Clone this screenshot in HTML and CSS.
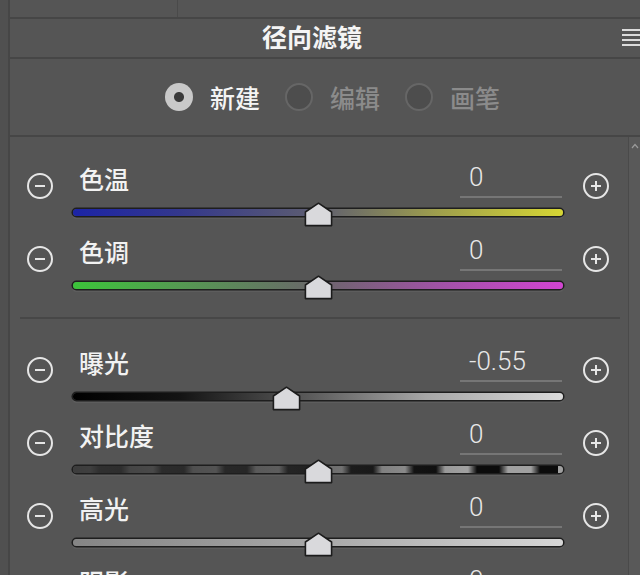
FILE: index.html
```html
<!DOCTYPE html>
<html lang="zh-CN">
<head>
  <meta charset="UTF-8">
  <meta name="viewport" content="width=device-width, initial-scale=1.0">
  <title>径向滤镜</title>
  <link rel="stylesheet" href="styles.css">
</head>
<body>
  <div class="app">
    <div class="side"></div>
    <div class="main">
      <div class="topbar"><span class="topbar-tab"></span></div>

      <div class="header">
        <span></span>
        <h1>径向滤镜</h1>
        <span class="menu"><i></i><i></i><i></i><i></i></span>
      </div>

      <div class="modes">
        <div class="mode active"><span class="radio"></span>新建</div>
        <div class="mode"><span class="radio"></span>编辑</div>
        <div class="mode"><span class="radio"></span>画笔</div>
      </div>

      <div class="body">
        <div class="sliders">
          <div class="group first">
            <div class="row">
              <span class="btn minus"></span>
              <div class="head"><span class="label">色温</span><span class="value">0</span></div>
              <span class="btn plus"></span>
              <div class="track temp">
                <svg class="thumb" style="left: 50%" viewBox="0 0 29 25"><polygon points="14.5,1.2 27.6,10 27.6,23.6 1.4,23.6 1.4,10"/></svg>
              </div>
            </div>
            <div class="row">
              <span class="btn minus"></span>
              <div class="head"><span class="label">色调</span><span class="value">0</span></div>
              <span class="btn plus"></span>
              <div class="track tint">
                <svg class="thumb" style="left: 50%" viewBox="0 0 29 25"><polygon points="14.5,1.2 27.6,10 27.6,23.6 1.4,23.6 1.4,10"/></svg>
              </div>
            </div>
          </div>

          <div class="divider"></div>

          <div class="group">
            <div class="row">
              <span class="btn minus"></span>
              <div class="head"><span class="label">曝光</span><span class="value">-0.55</span></div>
              <span class="btn plus"></span>
              <div class="track exposure">
                <svg class="thumb" style="left: 43.5%" viewBox="0 0 29 25"><polygon points="14.5,1.2 27.6,10 27.6,23.6 1.4,23.6 1.4,10"/></svg>
              </div>
            </div>
            <div class="row">
              <span class="btn minus"></span>
              <div class="head"><span class="label">对比度</span><span class="value">0</span></div>
              <span class="btn plus"></span>
              <div class="track contrast">
                <svg class="thumb" style="left: 50%" viewBox="0 0 29 25"><polygon points="14.5,1.2 27.6,10 27.6,23.6 1.4,23.6 1.4,10"/></svg>
              </div>
            </div>
            <div class="row">
              <span class="btn minus"></span>
              <div class="head"><span class="label">高光</span><span class="value">0</span></div>
              <span class="btn plus"></span>
              <div class="track highlights">
                <svg class="thumb" style="left: 50%" viewBox="0 0 29 25"><polygon points="14.5,1.2 27.6,10 27.6,23.6 1.4,23.6 1.4,10"/></svg>
              </div>
            </div>
            <div class="row">
              <span class="btn minus"></span>
              <div class="head"><span class="label">阴影</span><span class="value">0</span></div>
              <span class="btn plus"></span>
              <div class="track highlights"></div>
            </div>
          </div>
        </div>

        <div class="scrollbar">
          <svg viewBox="0 0 8 6" width="8" height="6"><polyline points="1,5 4,1.5 7,5"/></svg>
        </div>
      </div>
    </div>
  </div>
</body>
</html>
```

FILE: styles.css
```css
* {
  box-sizing: border-box;
}

html, body {
  margin: 0;
  height: 100%;
  overflow: hidden;
}

body {
  background-color: #555555;
  font-family: "Noto Sans CJK SC", "Noto Sans", sans-serif;
  color: #f2f2f2;
}

.app {
  display: flex;
  height: 100%;
}

.side {
  width: 10px;
  flex: none;
  background: #505050;
  border-right: 2px solid #464646;
}

.main {
  flex: 1;
  display: flex;
  flex-direction: column;
  min-width: 0;
}

/* top strip */
.topbar {
  height: 19px;
  flex: none;
  border-bottom: 2px solid #464646;
  padding-left: 167px;
}

.topbar-tab {
  display: block;
  width: 1px;
  height: 17px;
  background: #4a4a4a;
}

/* panel title */
.header {
  height: 40px;
  flex: none;
  display: grid;
  grid-template-columns: 1fr auto 1fr;
  align-items: start;
  padding-right: 26px;
  border-bottom: 2px solid #464646;
}

.header h1 {
  margin: 0;
  padding-top: 5px;
  font-size: 25px;
  line-height: 25px;
  font-weight: 700;
  color: #f4f4f4;
}

.menu {
  justify-self: end;
  margin-right: -26px;
  margin-top: 10px;
  width: 18px;
  display: flex;
  flex-direction: column;
  gap: 3px;
}

.menu i {
  display: block;
  height: 2px;
  background: #dcdcdc;
}

/* new / edit / brush */
.modes {
  height: 78px;
  flex: none;
  display: flex;
  align-items: center;
  justify-content: center;
  padding-left: 15px;
  gap: 25px;
  border-bottom: 2px solid #464646;
}

.mode {
  display: flex;
  align-items: center;
  gap: 17px;
  font-size: 25px;
  line-height: 25px;
  font-weight: 500;
  color: #8b8b8b;
}

.mode .radio {
  width: 28px;
  height: 28px;
  border-radius: 50%;
  border: 2px solid #666666;
  background: #4d4d4d;
}

.mode.active {
  color: #f4f4f4;
}

.mode.active .radio {
  border: none;
  background: radial-gradient(circle, #3a3a3a 0 4.5px, #c9c9c9 5.5px);
}

/* slider area */
.body {
  flex: 1;
  display: flex;
  min-height: 0;
}

.sliders {
  flex: 1;
  min-width: 0;
}

.scrollbar {
  width: 12px;
  flex: none;
  background: #595959;
  border-left: 1px solid #4a4a4a;
  display: flex;
  justify-content: center;
  padding-top: 6px;
}

.scrollbar svg {
  fill: none;
  stroke: #9a9a9a;
  stroke-width: 1.2;
}

.group {
  padding-top: 6px;
}

.group.first {
  padding-top: 21px;
}

.divider {
  height: 2px;
  margin: 13px 8px 17px 10px;
  background: #474747;
}

.row {
  height: 73px;
  display: grid;
  grid-template-columns: 63px 490px 1fr;
  grid-template-rows: 40px 28px;
}

.btn {
  grid-row: 1;
  align-self: start;
  margin-top: 15px;
  width: 26px;
  height: 26px;
  border: 2px solid #e6e6e6;
  border-radius: 50%;
  position: relative;
}

.btn.minus {
  grid-column: 1;
  margin-left: 17px;
}

.btn.plus {
  grid-column: 3;
  margin-left: 20px;
}

.btn::before,
.btn.plus::after {
  content: "";
  position: absolute;
  left: 50%;
  top: 50%;
  width: 10px;
  height: 2px;
  margin: -1px 0 0 -5px;
  background: #e6e6e6;
}

.btn.plus::after {
  width: 2px;
  height: 10px;
  margin: -5px 0 0 -1px;
}

.head {
  grid-column: 2;
  grid-row: 1;
  display: flex;
  justify-content: space-between;
  align-items: flex-start;
}

.label {
  padding: 8px 0 0 6px;
  font-size: 25px;
  line-height: 25px;
  font-weight: 500;
  color: #f2f2f2;
}

.value {
  width: 102px;
  height: 40px;
  margin-right: 1px;
  padding: 6px 0 0 9px;
  border-bottom: 2px solid #767676;
  font-family: Roboto, "Liberation Sans", sans-serif;
  font-weight: 300;
  font-size: 26px;
  line-height: 26px;
  color: #e8e8e8;
}

.track {
  grid-column: 2;
  grid-row: 2;
  align-self: center;
  height: 7px;
  border-radius: 4px;
  position: relative;
  box-shadow: 0 0 0 1.5px #1e1e1e, 0 2px 1px 1px rgba(255, 255, 255, 0.06);
}

.track.temp {
  background: linear-gradient(90deg, #1c24a6 0%, #34388c 22%, #5e5e70 50%, #a0a04c 75%, #d6d634 100%);
}

.track.tint {
  background: linear-gradient(90deg, #3cc43a 0%, #559a52 22%, #6a666a 50%, #a152a6 75%, #d244d2 100%);
}

.track.exposure {
  background: linear-gradient(90deg, #000 0%, #141414 22%, #5a5a5a 48%, #a6a6a6 72%, #dadada 100%);
}

.track.contrast {
  background:
    linear-gradient(90deg, rgba(52, 52, 52, 0.92) 0%, rgba(52, 52, 52, 0.6) 45%, rgba(52, 52, 52, 0) 80%),
    repeating-linear-gradient(90deg, #a0a0a0 0, #a0a0a0 22px, #0c0c0c 31px, #0c0c0c 53px, #a0a0a0 62px, #a0a0a0 63px);
  background-position: 0 0, -5px 0;
}

.track.highlights {
  background: linear-gradient(90deg, #858585 0%, #a8a8a8 50%, #d6d6d6 100%);
}

/* thumb sits on top of the track */
.thumb {
  position: absolute;
  top: -7px;
  width: 29px;
  height: 25px;
  margin-left: -14.5px;
}

.thumb polygon {
  fill: #d9d9dc;
  stroke: #1c1c1c;
  stroke-width: 1.6;
  stroke-linejoin: round;
}
```
